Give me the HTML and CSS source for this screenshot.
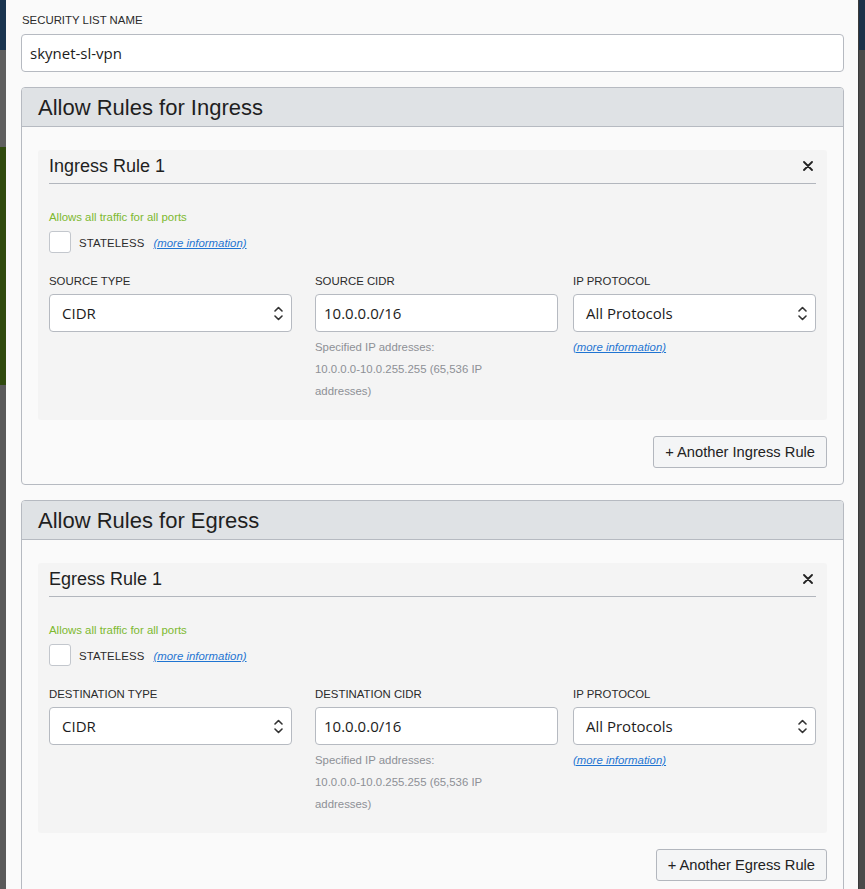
FILE: index.html
```html
<!DOCTYPE html>
<html lang="en">
<head>
<meta charset="utf-8">
<title>Security List</title>
<link rel="stylesheet" href="styles.css">
</head>
<body>
  <div class="strip strip-left">
    <div class="s-navy"></div>
    <div class="s-gray"></div>
    <div class="s-green"></div>
    <div class="s-rest"></div>
  </div>

  <div class="modal">
    <div class="field-label top-label">Security List Name</div>
    <div class="text-input wide">skynet-sl-vpn</div>

    <section class="section">
      <div class="section-head">Allow Rules for Ingress</div>
      <div class="section-body">
        <div class="rule-card">
          <div class="card-head">
            <span class="card-title">Ingress Rule 1</span>
            <svg class="close" width="10" height="10" viewBox="0 0 10 10"><path d="M1 1 L9 9 M9 1 L1 9" stroke="#222" stroke-width="1.8" stroke-linecap="round"/></svg>
          </div>
          <div class="note">Allows all traffic for all ports</div>
          <div class="stateless-row">
            <span class="checkbox"></span>
            <span class="stateless">Stateless</span>
            <a class="more" href="#">(more information)</a>
          </div>
          <div class="rule-grid">
            <div class="col">
              <div class="field-label">Source Type</div>
              <div class="select">CIDR<svg class="arrows" width="9" height="15" viewBox="0 0 9 15"><path d="M1 5 L4.5 1.5 L8 5 M1 10 L4.5 13.5 L8 10" fill="none" stroke="#333" stroke-width="1.6" stroke-linecap="round" stroke-linejoin="round"/></svg></div>
            </div>
            <div class="col">
              <div class="field-label">Source CIDR</div>
              <div class="text-input">10.0.0.0/16</div>
              <div class="helper">
                <div>Specified IP addresses:</div>
                <div class="helper-range">10.0.0.0-10.0.255.255 (65,536 IP addresses)</div>
              </div>
            </div>
            <div class="col">
              <div class="field-label">IP Protocol</div>
              <div class="select">All Protocols<svg class="arrows" width="9" height="15" viewBox="0 0 9 15"><path d="M1 5 L4.5 1.5 L8 5 M1 10 L4.5 13.5 L8 10" fill="none" stroke="#333" stroke-width="1.6" stroke-linecap="round" stroke-linejoin="round"/></svg></div>
              <div class="more-under"><a class="more" href="#">(more information)</a></div>
            </div>
          </div>
        </div>
        <div class="btn-row"><button class="btn">+ Another Ingress Rule</button></div>
      </div>
    </section>

    <section class="section">
      <div class="section-head">Allow Rules for Egress</div>
      <div class="section-body">
        <div class="rule-card">
          <div class="card-head">
            <span class="card-title">Egress Rule 1</span>
            <svg class="close" width="10" height="10" viewBox="0 0 10 10"><path d="M1 1 L9 9 M9 1 L1 9" stroke="#222" stroke-width="1.8" stroke-linecap="round"/></svg>
          </div>
          <div class="note">Allows all traffic for all ports</div>
          <div class="stateless-row">
            <span class="checkbox"></span>
            <span class="stateless">Stateless</span>
            <a class="more" href="#">(more information)</a>
          </div>
          <div class="rule-grid">
            <div class="col">
              <div class="field-label">Destination Type</div>
              <div class="select">CIDR<svg class="arrows" width="9" height="15" viewBox="0 0 9 15"><path d="M1 5 L4.5 1.5 L8 5 M1 10 L4.5 13.5 L8 10" fill="none" stroke="#333" stroke-width="1.6" stroke-linecap="round" stroke-linejoin="round"/></svg></div>
            </div>
            <div class="col">
              <div class="field-label">Destination CIDR</div>
              <div class="text-input">10.0.0.0/16</div>
              <div class="helper">
                <div>Specified IP addresses:</div>
                <div class="helper-range">10.0.0.0-10.0.255.255 (65,536 IP addresses)</div>
              </div>
            </div>
            <div class="col">
              <div class="field-label">IP Protocol</div>
              <div class="select">All Protocols<svg class="arrows" width="9" height="15" viewBox="0 0 9 15"><path d="M1 5 L4.5 1.5 L8 5 M1 10 L4.5 13.5 L8 10" fill="none" stroke="#333" stroke-width="1.6" stroke-linecap="round" stroke-linejoin="round"/></svg></div>
              <div class="more-under"><a class="more" href="#">(more information)</a></div>
            </div>
          </div>
        </div>
        <div class="btn-row"><button class="btn">+ Another Egress Rule</button></div>
      </div>
    </section>
  </div>

  <div class="strip strip-right">
    <div class="s-navy s-navy-r"></div>
    <div class="s-rest s-rest-r"></div>
  </div>
</body>
</html>
```

FILE: styles.css
```css
* { box-sizing: border-box; }

html, body {
  margin: 0;
  padding: 0;
}

body {
  display: flex;
  height: 889px;
  overflow: hidden;
  background: #4a4a4a;
  font-family: "Liberation Sans", Arial, sans-serif;
  color: #222;
}

/* backdrop slivers */
.strip {
  display: flex;
  flex-direction: column;
  flex: none;
}
.strip-left { width: 6px; }
.strip-right { flex: 1; border-left: 1px solid #3a3a3a; }
.s-navy { height: 50px; background: #1b3550; }
.s-navy-r { background: #1d3149; }
.s-gray { height: 97px; background: #5f5f5f; }
.s-green { height: 238px; background: #304a0e; }
.s-rest { flex: 1; background: #5a5a5a; }
.s-rest-r { background: #4a4a4a; }

/* modal */
.modal {
  width: 852px;
  flex: none;
  background: #fafafa;
  padding: 13px 14px 0 15px;
  overflow: hidden;
}

.field-label {
  font-size: 11.4px;
  line-height: 14px;
  text-transform: uppercase;
  color: #2b2b2b;
  margin-bottom: 6px;
  white-space: nowrap;
}
.top-label { margin-bottom: 7px; padding-left: 1px; }

.text-input,
.select {
  height: 38px;
  border: 1px solid #b6bac1;
  border-radius: 4px;
  background: #fff;
  display: flex;
  align-items: center;
  font-family: "Open Sans", sans-serif;
  font-size: 15px;
  color: #1c1c1c;
  width: 243px;
}
.text-input { padding: 0 8px; }
.text-input.wide { width: auto; }
.select {
  padding: 0 8px 0 12px;
  justify-content: space-between;
}
.arrows { flex: none; }

/* sections */
.section {
  margin-top: 15px;
  border: 1px solid #b6bac1;
  border-radius: 4px;
  background: #fafafa;
}
.section-head {
  height: 39px;
  background: #dfe2e5;
  border-bottom: 1px solid #b6bac1;
  border-radius: 3px 3px 0 0;
  display: flex;
  align-items: center;
  padding: 2px 16px 0;
  font-size: 22px;
  line-height: 26px;
  color: #1f1f1f;
}
.section-body {
  padding: 23px 16px 16px;
}

.rule-card {
  background: #f4f4f4;
  border-radius: 3px;
  padding: 0 11px 18px;
}
.card-head {
  display: flex;
  justify-content: space-between;
  align-items: center;
  padding: 5px 0 6px;
  border-bottom: 1px solid #b2b6bd;
}
.card-title {
  font-size: 18px;
  line-height: 22px;
  color: #1f1f1f;
}
.close { margin-right: 3px; }

.note {
  margin-top: 26px;
  font-size: 11.4px;
  line-height: 14px;
  color: #7db92f;
}

.stateless-row {
  margin-top: 7px;
  display: flex;
  align-items: center;
  height: 22px;
}
.checkbox {
  width: 22px;
  height: 22px;
  border: 1px solid #c3c7cd;
  border-radius: 3px;
  background: #fff;
  flex: none;
}
.stateless {
  margin-left: 8px;
  font-size: 11.4px;
  letter-spacing: 0.15px;
  text-transform: uppercase;
  color: #2b2b2b;
  padding-top: 2px;
}
.more {
  margin-left: 9px;
  font-size: 11.4px;
  font-style: italic;
  color: #1f74d2;
  text-decoration: underline;
  padding-top: 2px;
}

.rule-grid {
  margin-top: 21px;
  display: grid;
  grid-template-columns: 266px 258px 243px;
}
.helper {
  margin-top: 4px;
  font-size: 11.4px;
  line-height: 22px;
  color: #8d9096;
}
.helper-range { max-width: 180px; }
.more-under {
  margin-top: 4px;
  font-size: 11.4px;
  line-height: 22px;
}
.more-under .more {
  margin-left: 0;
  padding-top: 0;
}

.btn-row {
  display: flex;
  justify-content: flex-end;
  margin-top: 16px;
}
.btn {
  height: 32px;
  padding: 0 11px;
  border: 1px solid #b3b7be;
  border-radius: 3px;
  background: #f4f5f6;
  font-family: "Liberation Sans", Arial, sans-serif;
  font-size: 14.7px;
  color: #222;
}
```
